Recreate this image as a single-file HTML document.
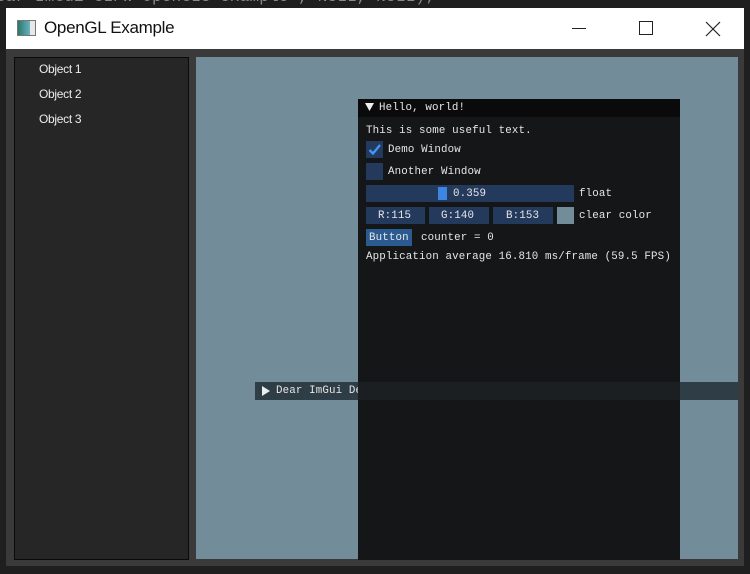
<!DOCTYPE html>
<html><head><meta charset="utf-8"><style>
*{margin:0;padding:0;box-sizing:border-box}
body{width:750px;height:574px;background:#1f1f1f;position:relative;overflow:hidden;font-family:"Liberation Mono",monospace}
.a{position:absolute}
.m{font-family:"Liberation Mono",monospace;font-size:10.8px;letter-spacing:0.15px;color:#e6e6e6;white-space:pre;line-height:13px}
.bg{color:#8a8a8a;font-size:16px;top:-9px;left:-4px;white-space:pre}
.win{left:6px;top:8px;width:738px;height:558px;background:#3a3a3a}
.title{left:6px;top:8px;width:738px;height:41px;background:#fff}
.tt{left:44px;top:18px;font-family:"Liberation Sans",sans-serif;font-size:17px;letter-spacing:-0.3px;color:#111}
.left{left:14px;top:57px;width:175px;height:503px;background:#262626;border:1px solid #0a0a0a}
.obj{font-family:"Liberation Sans",sans-serif;font-size:12px;letter-spacing:-0.3px;color:#ececec;left:39px}
.vp{left:196px;top:57px;width:542px;height:502px;background:#738c99}
.hw{left:358px;top:99px;width:322px;height:461px;background:#151618}
.ht{left:358px;top:99px;width:322px;height:18px;background:#0a0a0a}
.fb{background:#233a5c}
.demo{left:255px;top:382px;width:483px;height:18px;background:#2f3d46}
</style></head><body>
<div class="a m bg">ear ImGui GLFW OpenGL3 example", NULL, NULL);</div>
<div class="a win"></div>
<div class="a title"></div>
<div class="a" style="left:17px;top:20px;width:19px;height:16px;border:1px solid #777;background:linear-gradient(90deg,#2a7a6a,#6ab0c0 70%,#e8e8e8 70%)"></div>
<div class="a tt">OpenGL Example</div>
<div class="a" style="left:572px;top:28px;width:14px;height:1px;background:#222"></div>
<div class="a" style="left:639px;top:21px;width:14px;height:14px;border:1px solid #222"></div>
<svg class="a" style="left:705px;top:21px" width="16" height="16"><path d="M1 1L15 15M15 1L1 15" stroke="#222" stroke-width="1.2"/></svg>
<div class="a left"></div>
<div class="a obj" style="top:62px">Object 1</div>
<div class="a obj" style="top:87px">Object 2</div>
<div class="a obj" style="top:112px">Object 3</div>
<div class="a vp"></div>
<div class="a demo"></div>
<svg class="a" style="left:262px;top:386px" width="9" height="10"><path d="M0 0L8 5L0 10Z" fill="#eee"/></svg>
<div class="a m" style="left:276px;top:385px">Dear ImGui Demo</div>
<div class="a hw"></div>
<div class="a" style="left:358px;top:382px;width:322px;height:18px;background:#1b1f22"></div>
<div class="a ht"></div>
<svg class="a" style="left:365px;top:103px" width="9" height="9"><path d="M0 0L9 0L4.5 8Z" fill="#eee"/></svg>
<div class="a m" style="left:379px;top:102px">Hello, world!</div>
<div class="a m" style="left:366px;top:125px">This is some useful text.</div>
<div class="a fb" style="left:366px;top:141px;width:17px;height:17px"></div>
<svg class="a" style="left:366px;top:141px" width="17" height="17"><path d="M3.5 9L7 12.5L14 4" stroke="#4296fa" stroke-width="2.3" fill="none"/></svg>
<div class="a m" style="left:388px;top:144px">Demo Window</div>
<div class="a fb" style="left:366px;top:163px;width:17px;height:17px"></div>
<div class="a m" style="left:388px;top:166px">Another Window</div>
<div class="a fb" style="left:366px;top:185px;width:208px;height:17px"></div>
<div class="a" style="left:438px;top:187px;width:9px;height:13px;background:#3d85e0"></div>
<div class="a m" style="left:453px;top:188px">0.359</div>
<div class="a m" style="left:579px;top:188px">float</div>
<div class="a fb" style="left:366px;top:207px;width:59px;height:17px"></div>
<div class="a m" style="left:378px;top:210px">R:115</div>
<div class="a fb" style="left:429px;top:207px;width:60px;height:17px"></div>
<div class="a m" style="left:441px;top:210px">G:140</div>
<div class="a fb" style="left:493px;top:207px;width:60px;height:17px"></div>
<div class="a m" style="left:506px;top:210px">B:153</div>
<div class="a" style="left:557px;top:207px;width:17px;height:17px;background:#738c99"></div>
<div class="a m" style="left:579px;top:210px">clear color</div>
<div class="a" style="left:366px;top:229px;width:46px;height:17px;background:#2a5a90"></div>
<div class="a m" style="left:369px;top:232px">Button</div>
<div class="a m" style="left:421px;top:232px">counter = 0</div>
<div class="a m" style="left:366px;top:251px">Application average 16.810 ms/frame (59.5 FPS)</div>
</body></html>
